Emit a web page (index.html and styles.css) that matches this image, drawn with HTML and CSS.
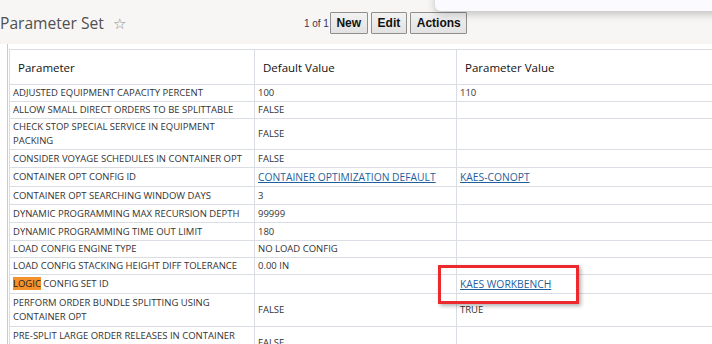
FILE: index.html
```html
<!DOCTYPE html>
<html lang="en">
<head>
  <meta charset="UTF-8">
  <title>Parameter Set</title>
  <link rel="stylesheet" href="styles.css">
</head>
<body>
  <div class="popup"></div>
  <div class="header">
    <h1>Parameter Set</h1>
    <span class="star">&#9734;</span>
    <div class="toolbar">
      <span class="count">1 of 1</span>
      <button>New</button>
      <button>Edit</button>
      <button>Actions</button>
    </div>
  </div>
  <div class="content">
    <table class="grid">
      <colgroup>
        <col class="c1"><col class="c2"><col class="c3">
      </colgroup>
      <tr class="head">
        <th>Parameter</th>
        <th>Default Value</th>
        <th>Parameter Value</th>
      </tr>
      <tr class="short"><td>ADJUSTED EQUIPMENT CAPACITY PERCENT</td><td>100</td><td>110</td></tr>
      <tr class="short"><td>ALLOW SMALL DIRECT ORDERS TO BE SPLITTABLE</td><td>FALSE</td><td></td></tr>
      <tr><td>CHECK STOP SPECIAL SERVICE IN EQUIPMENT PACKING</td><td>FALSE</td><td></td></tr>
      <tr><td>CONSIDER VOYAGE SCHEDULES IN CONTAINER OPT</td><td>FALSE</td><td></td></tr>
      <tr class="linkrow"><td>CONTAINER OPT CONFIG ID</td><td><a href="#">CONTAINER OPTIMIZATION DEFAULT</a></td><td><a href="#">KAES-CONOPT</a></td></tr>
      <tr><td>CONTAINER OPT SEARCHING WINDOW DAYS</td><td>3</td><td></td></tr>
      <tr><td>DYNAMIC PROGRAMMING MAX RECURSION DEPTH</td><td>99999</td><td></td></tr>
      <tr><td>DYNAMIC PROGRAMMING TIME OUT LIMIT</td><td>180</td><td></td></tr>
      <tr class="short"><td>LOAD CONFIG ENGINE TYPE</td><td>NO LOAD CONFIG</td><td></td></tr>
      <tr class="short"><td>LOAD CONFIG STACKING HEIGHT DIFF TOLERANCE</td><td>0.00 IN</td><td></td></tr>
      <tr class="linkrow tall"><td><mark>LOGIC</mark> CONFIG SET ID</td><td></td><td class="marked"><a href="#">KAES WORKBENCH</a><span class="callout"></span></td></tr>
      <tr class="double"><td>PERFORM ORDER BUNDLE SPLITTING USING CONTAINER OPT</td><td>FALSE</td><td>TRUE</td></tr>
      <tr class="double"><td>PRE-SPLIT LARGE ORDER RELEASES IN CONTAINER OPT</td><td>FALSE</td><td></td></tr>
    </table>
  </div>
</body>
</html>
```

FILE: styles.css
```css
* {
  margin: 0;
  padding: 0;
  box-sizing: border-box;
}
body {
  background: #fff;
  font-family: 'Open Sans', sans-serif;
  color: #333;
  overflow: hidden;
}
.header {
  background: #f7f6f5;
  height: 44px;
  display: flex;
  align-items: center;
}
h1 {
  font-size: 15.6px;
  font-weight: normal;
  color: #505050;
  margin-top: 2px;
}
.star {
  color: #8a8a8a;
  font-size: 15px;
  margin-left: 9px;
  margin-top: 1px;
}
.toolbar {
  display: flex;
  align-items: center;
  margin-left: 178px;
  margin-top: 2px;
}
.count {
  font-family: 'Liberation Sans', sans-serif;
  font-size: 10px;
  color: #3b3350;
  margin-right: 1px;
}
.toolbar button {
  font-family: 'Liberation Sans', sans-serif;
  font-weight: bold;
  font-size: 12px;
  color: #111;
  background: linear-gradient(#f2f2f2, #e2e2e2);
  border: 1px solid #8f8f8f;
  border-radius: 1px;
  height: 22px;
  padding: 0 5.5px;
  margin-right: 3.5px;
}
.popup {
  position: absolute;
  top: -10px;
  left: 435px;
  width: 300px;
  height: 21px;
  background: #fbfbff;
  border-radius: 6px;
  box-shadow: 0 3px 8px rgba(0, 0, 0, 0.22);
}
.content {
  margin-left: 7px;
  border-left: 1px solid #c6c9de;
  padding: 5px 0 0 1px;
  height: 300px;
  overflow: hidden;
}
.grid {
  border-collapse: collapse;
  width: 760px;
  table-layout: fixed;
  font-size: 9.5px;
}
.c1 { width: 245px; }
.c2 { width: 202px; }
.grid th, .grid td {
  border: 1px solid #dadde3;
  text-align: left;
  vertical-align: middle;
}
.grid th {
  height: 35px;
  font-size: 11.5px;
  font-weight: normal;
  color: #111;
  padding-left: 8px;
}
.grid td {
  height: 18px;
  padding: 1px 3px;
  line-height: 14px;
  color: #333;
}
.grid .short td {
  height: 17px;
}
.grid .linkrow td {
  height: 19px;
}
.grid .tall td {
  height: 19px;
}
.grid .double td {
  height: 33px;
}
.grid a {
  color: #1f5f9e;
  font-size: 10.3px;
}
mark {
  background: #f4912c;
  color: #222;
}
.marked {
  position: relative;
}
.callout {
  position: absolute;
  left: -19px;
  top: -10px;
  width: 141px;
  height: 39px;
  border: 3px solid #ec2a2e;
  box-shadow: 2px 2px 4px rgba(0, 0, 0, 0.3);
}
```
